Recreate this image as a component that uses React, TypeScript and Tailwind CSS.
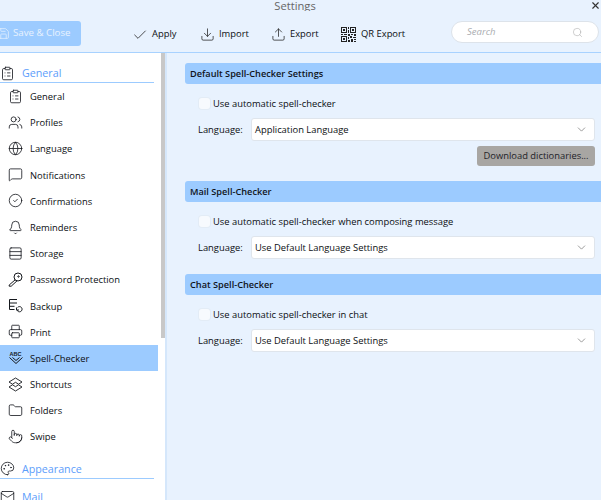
import {
  Bell,
  Check,
  ChevronDown,
  CircleCheck,
  ClipboardList,
  Download,
  Folder,
  Globe,
  Mail,
  MessageSquare,
  Palette,
  Pointer,
  Printer,
  Rows3,
  Save,
  Search,
  Upload,
  Users,
  X,
} from "lucide-react";
import type { ReactNode } from "react";

const iconProps = { size: 15, strokeWidth: 1.3, color: "#15181d" };

function BackupIcon() {
  return (
    <svg width="15" height="15" viewBox="0 0 15 15" fill="none" stroke="#15181d" strokeWidth="1">
      <path d="M9 1.500H1.500v10h5M1.500 5h7.500M1.500 8.300h5" />
      <path d="M8.500 9.500v2.500h2.500M9 12a2.600 2.600 0 1 0 .6-2.600" />
    </svg>
  );
}

function KeyIcon() {
  return (
    <svg width="15" height="15" viewBox="0 0 15 15" fill="none" stroke="#15181d" strokeWidth="1">
      <circle cx="10" cy="5" r="4" />
      <path d="M7.200 7.800L1.200 13v1.200h2l6-5.500" />
      <circle cx="10.500" cy="4.500" r=".7" />
    </svg>
  );
}

function SpellIcon() {
  return (
    <svg width="16" height="15" viewBox="0 0 16 15" fill="none" stroke="#15181d" strokeWidth="1">
      <text x="1.500" y="5.500" fontSize="5.500" fontWeight="700" fill="#15181d" stroke="none" fontFamily="Liberation Sans, sans-serif">
        ABC
      </text>
      <path d="M1.500 7.500l6.500 6 6.500-6M4.500 7.500l3.500 3 3.500-3" />
    </svg>
  );
}

function ShortcutIcon() {
  return (
    <svg width="15" height="15" viewBox="0 0 15 15" fill="none" stroke="#15181d" strokeWidth="0.9">
      <path d="M7.500 1L14 5 10.500 7.200 7.500 5.300 4.500 7.200 1 5z" />
      <path d="M7.500 14L1 10l3.500-2.200 3 1.900 3-1.900L14 10z" />
    </svg>
  );
}

function QrIcon() {
  return (
    <svg width="15" height="15" viewBox="0 0 15 15" fill="#222">
      <path d="M0 0h6v6H0zM1 1v4h4V1zM2 2h2v2H2z" fillRule="evenodd" />
      <path d="M9 0h6v6H9zM10 1v4h4V1zM11 2h2v2h-2z" fillRule="evenodd" />
      <path d="M0 9h6v6H0zM1 10v4h4v-4zM2 11h2v2H2z" fillRule="evenodd" />
      <path d="M7 0h1v2H7zM7 3h1v3H7zM0 7h2v1H0zM3 7h3v1H3zM7 7h2v2H7zM10 7h2v1h-2zM13 7h2v2h-2zM7 10h1v2H7zM9 9h2v2H9zM12 10h3v1h-3zM7 13h2v2H7zM10 12h2v3h-2zM13 12h2v1h-2zM13 14h2v1h-2z" />
    </svg>
  );
}

const items: { label: string; icon: ReactNode; active?: boolean }[] = [
  { label: "General", icon: <ClipboardList {...iconProps} /> },
  { label: "Profiles", icon: <Users {...iconProps} /> },
  { label: "Language", icon: <Globe {...iconProps} /> },
  { label: "Notifications", icon: <MessageSquare {...iconProps} /> },
  { label: "Confirmations", icon: <CircleCheck {...iconProps} /> },
  { label: "Reminders", icon: <Bell {...iconProps} /> },
  { label: "Storage", icon: <Rows3 {...iconProps} /> },
  { label: "Password Protection", icon: <KeyIcon /> },
  { label: "Backup", icon: <BackupIcon /> },
  { label: "Print", icon: <Printer {...iconProps} /> },
  { label: "Spell-Checker", icon: <SpellIcon />, active: true },
  { label: "Shortcuts", icon: <ShortcutIcon /> },
  { label: "Folders", icon: <Folder {...iconProps} /> },
  { label: "Swipe", icon: <Pointer {...iconProps} /> },
];

function SidebarHeading({ icon, label }: { icon: ReactNode; label: string }) {
  return (
    <div className="mr-[6px] flex h-[19px] items-center gap-[7px] border-b border-[#9ccbff] text-[10.7px] text-[#5c9dfb]">
      <span className="flex w-[15px] justify-center">{icon}</span>
      <span>{label}</span>
    </div>
  );
}

function Section({
  title,
  check,
  language,
  children,
}: {
  title: string;
  check: string;
  language: string;
  children?: ReactNode;
}) {
  return (
    <section>
      <h2 className="flex h-[21px] items-center rounded-l-[3px] bg-[#9ccbff] pt-[1px] pl-[5px] text-[9.2px] font-semibold text-[#10141a]">
        {title}
      </h2>
      <div className="mt-[12.5px] flex h-[14px] items-center gap-[3px] pl-[14px]">
        <span className="h-[11px] w-[11px] rounded-[3px] bg-[#f7fafe] shadow-[0_0_0_1px_#e3ecf6]" />
        <span className="pt-[2px]">{check}</span>
      </div>
      <div className="mt-[7px] flex items-center pr-[6px] pl-[13px]">
        <span className="w-[52.5px] pt-[2px]">Language:</span>
        <div className="flex h-[23px] flex-1 items-center justify-between rounded-[3px] border border-[#dfe5ec] bg-white pr-[6px] pl-[3.500px]">
          <span className="pt-[2px]">{language}</span>
          <ChevronDown size={13} strokeWidth={1.2} color="#666" />
        </div>
      </div>
      {children}
    </section>
  );
}

export default function App() {
  return (
    <div className="h-[500px] w-[601px] overflow-hidden bg-[#e8f2fe] font-['Open_Sans','Noto_Sans',sans-serif] text-[9.4px] whitespace-nowrap text-[#0c0f13]">
      <header className="h-[53px] border-b border-[#a8d2ff]">
        <div className="relative h-[11px] overflow-hidden pr-[11px] text-center text-[11.2px] leading-[11px] text-[#666]">
          Settings
          <X size={11} strokeWidth={2.500} color="#333" className="absolute top-0 right-0" />
        </div>
        <div className="mt-[10px] flex items-start">
          <button className="ml-[-4px] flex h-[25px] w-[85px] shrink-0 items-center gap-[3px] rounded-[3px] bg-[#9ccbff] pl-[1px] text-[9.7px] text-[#e8f2fe]">
            <Save size={13} strokeWidth={1.3} color="#e8f2fe" />
            Save &amp; Close
          </button>
          <div className="mt-[6px] ml-[51px] flex h-[15px] items-center">
            <span className="flex w-[68px] items-center gap-[4px]">
              <Check size={16} strokeWidth={1.2} color="#222" />
              Apply
            </span>
            <span className="flex w-[71px] items-center gap-[4px]">
              <Download size={15} strokeWidth={1.2} color="#222" />
              Import
            </span>
            <span className="flex w-[70px] items-center gap-[4px]">
              <Upload size={15} strokeWidth={1.2} color="#222" />
              Export
            </span>
            <span className="flex w-[110px] items-center gap-[5px]">
              <QrIcon />
              QR Export
            </span>
          </div>
          <div className="flex h-[22px] w-[148px] shrink-0 items-center justify-between rounded-full border border-[#dde3ea] bg-white px-[15px] text-[9.5px] text-[#a9acb0] italic">
            Search
            <Search size={11} strokeWidth={1} color="#999" />
          </div>
        </div>
      </header>
      <div className="flex h-[447px]">
        <aside className="relative h-full w-[167px] border-r-[2px] border-[#d5e7fb] bg-white pt-[11px]">
          <div className="absolute top-0 right-[0.5px] h-[285px] w-[4px] bg-[#c8c8c8]" />
          <div className="w-[160px]">
            <SidebarHeading icon={<ClipboardList {...iconProps} />} label="General" />
            <ul>
              {items.map((item) => (
                <li
                  key={item.label}
                  className={`flex h-[26.2px] items-center gap-[6px] pl-[7px] ${
                    item.active ? "mr-[2px] bg-[#9ccbff]" : ""
                  }`}
                >
                  <span className="flex w-[17px] justify-center">{item.icon}</span>
                  <span className="pt-[2px]">{item.label}</span>
                </li>
              ))}
            </ul>
            <div className="mt-[10px]">
              <SidebarHeading icon={<Palette {...iconProps} />} label="Appearance" />
            </div>
            <div className="mt-[9px]">
              <SidebarHeading icon={<Mail {...iconProps} />} label="Mail" />
            </div>
          </div>
        </aside>
        <main className="flex-1 pt-[10px] pl-[18px]">
          <Section
            title="Default Spell-Checker Settings"
            check="Use automatic spell-checker"
            language="Application Language"
          >
            <div className="mt-[5.500px] flex justify-end pr-[6px]">
              <button className="h-[20px] w-[118px] rounded-[3px] bg-[#a8a6a3] pt-[1px] text-[9.4px] text-[#1f2329]">
                Download dictionaries...
              </button>
            </div>
          </Section>
          <div className="mt-[15px]">
            <Section
              title="Mail Spell-Checker"
              check="Use automatic spell-checker when composing message"
              language="Use Default Language Settings"
            />
          </div>
          <div className="mt-[15.500px]">
            <Section
              title="Chat Spell-Checker"
              check="Use automatic spell-checker in chat"
              language="Use Default Language Settings"
            />
          </div>
        </main>
      </div>
    </div>
  );
}
